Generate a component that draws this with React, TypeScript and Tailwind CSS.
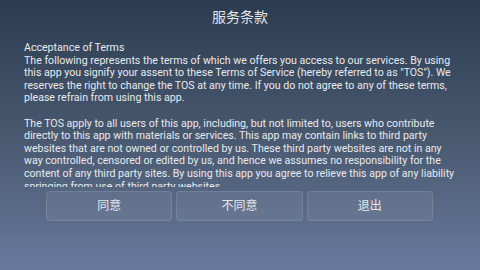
import React from "react";

const lines = [
  "Acceptance of Terms",
  "The following represents the terms of which we offers you access to our services. By using",
  'this app you signify your assent to these Terms of Service (hereby referred to as "TOS"). We',
  "reserves the right to change the TOS at any time. If you do not agree to any of these terms,",
  "please refrain from using this app.",
  "",
  "The TOS apply to all users of this app, including, but not limited to, users who contribute",
  "directly to this app with materials or services. This app may contain links to third party",
  "websites that are not owned or controlled by us. These third party websites are not in any",
  "way controlled, censored or edited by us, and hence we assumes no responsibility for the",
  "content of any third party sites. By using this app you agree to relieve this app of any liability",
  "springing from use of third party websites.",
];

const buttons = ["同意", "不同意", "退出"];

export default function App() {
  return (
    <div className="flex h-[270px] w-[480px] flex-col bg-linear-to-b from-[#2c3c50] via-[#48586f] to-[#687a9c] font-['Roboto','Noto_Sans_CJK_SC',sans-serif] text-[#e8eaee]">
      <div className="flex h-[34px] items-center justify-center text-[14px] text-[#e2e5ea]">
        服务条款
      </div>
      <div className="mx-[24px] mt-[8px] h-[145px] overflow-hidden text-[10.6px] leading-[12.6px]">
        {lines.map((line, i) => (
          <div key={i} className="h-[12.6px] whitespace-nowrap">
            {line}
          </div>
        ))}
      </div>
      <div className="ml-[46px] mt-[4px] grid w-[387px] grid-cols-3 gap-[4px]">
        {buttons.map((label) => (
          <button
            key={label}
            type="button"
            className="flex h-[30px] items-center justify-center rounded-[4px] border border-white/10 bg-white/[0.07] text-[12px] text-[#e4e7ec]"
          >
            {label}
          </button>
        ))}
      </div>
    </div>
  );
}
